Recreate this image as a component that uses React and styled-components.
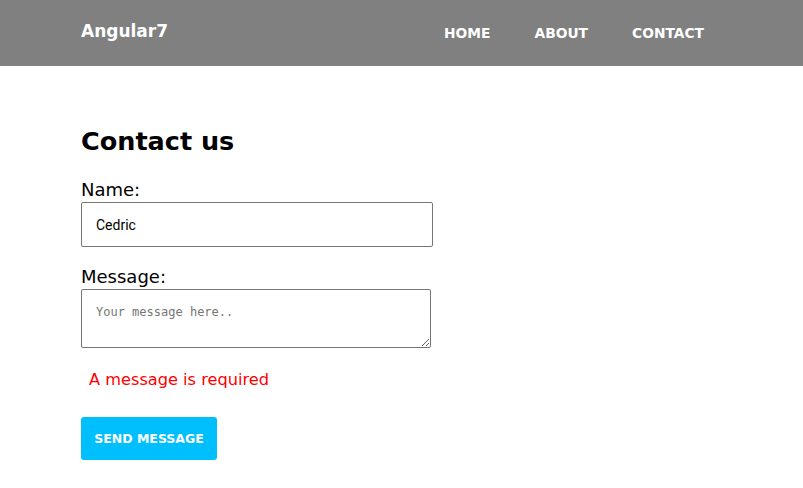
import React from 'react';
import styled, { createGlobalStyle } from 'styled-components';

const Global = createGlobalStyle`
body{
  margin:0;
  font-family:"DejaVu Sans", "Open Sans", sans-serif;
  background:#fff;
}
`;

const Header = styled.header`
  background-color:#808080;
  height:66px;
`;

const Container = styled.div`
  margin:0 81px;
`;

const Bar = styled(Container)`
  height:100%;
  display:flex;
  align-items:center;
  justify-content:space-between;
`;

const Logo = styled.div`
  color:#fff;
  font-weight:bold;
  font-size:17px;
  margin-top:-4px;
`;

const Nav = styled.nav`
  display:flex;
`;

const NavLink = styled.a`
  color:#fff;
  font-weight:bold;
  font-size:13.8px;
  text-transform:uppercase;
  padding:0 22px;
  text-decoration:none;
  cursor:pointer;
  &:last-child{ padding-right:18px; }
`;

const Main = styled(Container)`
  padding-top:60px;
`;

const Title = styled.h1`
  font-size:25.5px;
  font-weight:bold;
  margin:0 0 24px;
  color:#000;
`;

const Label = styled.label`
  display:block;
  font-size:18px;
  line-height:20px;
  color:#000;
  margin-bottom:2px;
`;

const Field = styled.input`
  display:block;
  box-sizing:border-box;
  width:352px;
  height:45px;
  border:1px solid #767676;
  border-radius:2px;
  padding:0 14px;
  font-family:Roboto, Arial, sans-serif;
  font-size:14px;
  color:#000;
  margin-bottom:20px;
`;

const Area = styled.textarea`
  display:block;
  box-sizing:border-box;
  width:350px;
  height:59px;
  border:1px solid #767676;
  border-radius:2px;
  padding:15px 14px 14px;
  font-family:"DejaVu Sans Mono", monospace;
  font-size:12px;
  margin:0;
  &::placeholder{ color:#757575; }
`;

const Error = styled.p`
  color:#ff0000;
  font-size:16.2px;
  margin:22px 0 0 8px;
`;

const Button = styled.button`
  margin-top:28px;
  background:#00bfff;
  border:none;
  border-radius:3px;
  color:#fff;
  font-family:inherit;
  font-weight:bold;
  font-size:12.5px;
  width:136px;
  height:43px;
  cursor:pointer;
`;

export default function App() {
  return (
    <>
      <Global />
      <Header>
        <Bar>
          <Logo>Angular7</Logo>
          <Nav>
            <NavLink>Home</NavLink>
            <NavLink>About</NavLink>
            <NavLink>Contact</NavLink>
          </Nav>
        </Bar>
      </Header>
      <Main>
        <Title>Contact us</Title>
        <Label>Name:</Label>
        <Field defaultValue="Cedric" />
        <Label>Message:</Label>
        <Area placeholder="Your message here.." />
        <Error>A message is required</Error>
        <Button>SEND MESSAGE</Button>
      </Main>
    </>
  );
}
